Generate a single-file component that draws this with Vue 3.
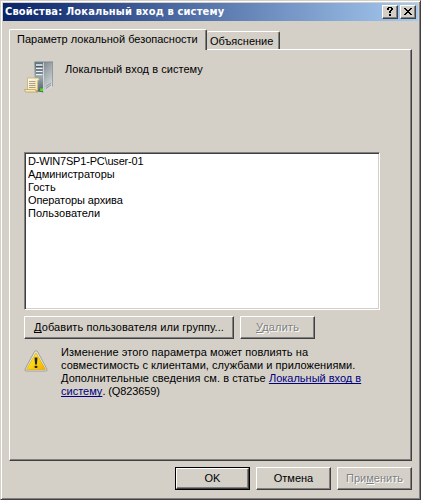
<script setup>
const accounts = [
  { name: 'D-WIN7SP1-PC\\user-01', spacing: '-0.19px' },
  { name: 'Администраторы', spacing: '-0.05px' },
  { name: 'Гость', spacing: '0' },
  { name: 'Операторы архива', spacing: '-0.1px' },
  { name: 'Пользователи', spacing: '0.03px' },
]
</script>

<template>
  <div class="window">
    <header class="titlebar">
      <span class="title">Свойства: Локальный вход в систему</span>
      <button class="caption" aria-label="Справка">
        <svg width="12" height="10" viewBox="0 0 12 10" shape-rendering="crispEdges">
          <path d="M4 0h4v1H4zM3 1h2v2H3zM7 1h2v2H7zM6 3h2v1H6zM5 4h2v2H5zM5 7h2v2H5z" />
        </svg>
      </button>
      <button class="caption close" aria-label="Закрыть">
        <svg width="12" height="10" viewBox="0 0 12 10" shape-rendering="crispEdges">
          <path d="M2 1h2v1h1v1h2V2h1V1h2v1H9v1H8v1H7v1h1v1h1v1h1v1H8V7H7V6H5v1H4v1H2V7h1V6h1V5h1V4H4V3H3V2H2z" />
        </svg>
      </button>
    </header>

    <nav class="tabs">
      <div class="tab active">Параметр локальной безопасности</div>
      <div class="tab other">Объяснение</div>
    </nav>

    <main class="pane">
      <div class="heading">
        <svg class="server" width="31" height="33" viewBox="0 0 31 33">
          <defs>
            <linearGradient id="side" x1="0.2" x2="0.6" y1="0" y2="1">
              <stop offset="0" stop-color="#848f93" />
              <stop offset=".55" stop-color="#b4bbbd" />
              <stop offset="1" stop-color="#dfe3e3" />
            </linearGradient>
            <linearGradient id="front" x1="0" x2="0" y1="0" y2="1">
              <stop offset="0" stop-color="#5d6f78" />
              <stop offset=".5" stop-color="#98a8b0" />
              <stop offset="1" stop-color="#4c5a60" />
            </linearGradient>
            <linearGradient id="paper" x1="0" x2="1" y1="0" y2="1">
              <stop offset="0" stop-color="#fffbe6" />
              <stop offset="1" stop-color="#f6e0a0" />
            </linearGradient>
          </defs>
          <path d="M10.5 1H20v30.500l-9.500-1.500z" fill="url(#front)" />
          <path d="M19.500 1H29v24.500L20 31.500z" fill="url(#side)" />
          <path d="M10.500 1H29" stroke="#7e898d" />
          <path d="M19.500 1.500v30" stroke="#dfe5e7" stroke-width=".8" />
          <path d="M28.500 1.500v24" stroke="#8a9396" stroke-width=".8" />
          <path d="M22 27.500l5-3.500M22 25.500l5-3.500" stroke="#848d90" stroke-width=".8" />
          <path d="M12 4h6.500M12 7.500h6.500M12 10.500h6.500M12 13.500h6.500" stroke="#eef2f4" stroke-width="1.300" />
          <path d="M12 5.500h6.500M12 9h6.500M12 12h6.500" stroke="#44525a" stroke-width=".9" />
          <rect x="16.200" y="27.400" width="2.800" height="2.800" fill="#4ee60c" />
          <path d="M3.500 17h10.300q1.400 0 1.400 1.300t-1.400 1.200v10H3.500z" fill="url(#paper)" stroke="#bba768" stroke-width=".7" />
          <path d="M.6 28.500h10.900q0 2.500 2.200 2.500H2.200Q.6 31 .6 28.500z" fill="#f9e9ae" stroke="#b39a58" stroke-width=".7" />
          <path d="M5 20.500h6.500M5 22.500h6.500M5 24.500h6.500M5 26.500h6.500" stroke="#8f8c80" stroke-width=".8" />
        </svg>
        <span class="policy">Локальный вход в систему</span>
      </div>

      <ul class="list">
        <li v-for="a in accounts" :key="a.name" :style="{ letterSpacing: a.spacing }">{{ a.name }}</li>
      </ul>

      <div class="actions">
        <button class="btn add"><span><u>Д</u>обавить пользователя или группу...</span></button>
        <button class="btn remove disabled"><span><u>У</u>далить</span></button>
      </div>

      <div class="notice">
        <svg class="warning" width="24" height="22" viewBox="0 0 24 22">
          <defs>
            <linearGradient id="amber" x1="0" x2="1" y1="0" y2="1">
              <stop offset="0" stop-color="#fff08a" />
              <stop offset=".5" stop-color="#fcd510" />
              <stop offset="1" stop-color="#f0ac00" />
            </linearGradient>
          </defs>
          <path d="M10.600 1.400Q12 0 13.400 1.400L23 19.200Q23.600 21 21.800 21H2.200Q.4 21 1 19.200z" fill="#e9e9e6" stroke="#96968f" stroke-width=".9" />
          <path d="M12 2.800 21.600 19.500H2.400z" fill="url(#amber)" stroke="#d6a000" stroke-width=".6" />
          <path d="M10.500 7.500h3l-.6 7h-1.800z" fill="#2b2509" />
          <rect x="10.700" y="15.700" width="2.600" height="2.400" rx=".6" fill="#2b2509" />
        </svg>
        <p>
          <span class="l1">Изменение этого параметра может повлиять на</span><br />
          <span class="l2">совместимость с клиентами, службами и приложениями.</span><br />
          <span class="l3">Дополнительные сведения см. в статье </span><a>Локальный вход в</a><br />
          <a>систему</a><span class="l4">. (Q823659)</span>
        </p>
      </div>
    </main>

    <footer class="footer">
      <button class="default"><span class="btn ok">OK</span></button>
      <button class="btn cancel">Отмена</button>
      <button class="btn apply disabled"><span>При<u>м</u>енить</span></button>
    </footer>
  </div>
</template>

<style>
body {
  margin: 0;
  background: #d4d0c8;
}
</style>

<style scoped>
* {
  box-sizing: border-box;
}
.window {
  width: 421px;
  height: 500px;
  padding: 1px;
  background: #d4d0c8;
  border: 1px solid;
  border-color: #d4d0c8 #404040 #404040 #d4d0c8;
  box-shadow: inset 1px 1px #fff, inset -1px -1px #808080;
  font: 11px/13px "Liberation Sans", Arial, sans-serif;
  color: #000;
  display: flex;
  flex-direction: column;
}
button {
  font: inherit;
  color: inherit;
  padding: 0;
  margin: 0;
  border: 0;
  border-radius: 0;
}
u,
a {
  text-decoration: underline;
  text-decoration-skip-ink: none;
}
.titlebar {
  display: flex;
  align-items: center;
  height: 18px;
  margin: 1px 1px 0;
  padding: 0 2px;
  background: linear-gradient(90deg, #0a246a, #a6caf0);
}
.title {
  flex: 1;
  color: #fff;
  font: bold 11px/16px "DejaVu Sans Condensed", "DejaVu Sans", sans-serif;
  letter-spacing: 0.17px;
  white-space: nowrap;
}
.caption {
  width: 16px;
  height: 14px;
  background: #d4d0c8;
  border: 1px solid;
  border-color: #fff #404040 #404040 #fff;
  box-shadow: inset -1px -1px #808080;
  display: flex;
  align-items: flex-start;
  justify-content: center;
  padding-top: 1px;
}
.caption.close {
  margin-left: 2px;
}
.tabs {
  display: flex;
  align-items: flex-end;
  height: 28px;
  padding-left: 7px;
}
.tab {
  border: 1px solid #fff;
  border-right-color: #404040;
  border-bottom: 0;
  border-radius: 2px 2px 0 0;
  box-shadow: inset -1px 0 #808080;
  white-space: nowrap;
}
.tab.active {
  width: 198px;
  height: 21px;
  padding: 3px 0 0 7px;
  margin-bottom: -1px;
  background: #d4d0c8;
  z-index: 1;
}
.tab.other {
  width: 73px;
  height: 18px;
  padding: 3px 0 0 3px;
  border-left: 0;
}
.pane {
  width: 403px;
  height: 412px;
  margin-left: 7px;
  padding: 11px 14px 0;
  border: 1px solid;
  border-color: #fff #404040 #404040 #fff;
  box-shadow: inset -1px -1px #808080;
}
.heading {
  display: flex;
  height: 91px;
}
.policy {
  margin: 2px 0 0 10px;
  letter-spacing: 0.05px;
}
.list {
  width: 356px;
  height: 158px;
  margin: 0;
  padding: 2px 3px;
  list-style: none;
  background: #fff;
  border: 1px solid;
  border-color: #808080 #fff #fff #808080;
  box-shadow: inset 1px 1px #404040, inset -1px -1px #d4d0c8;
}
.list li {
  height: 13px;
}
.btn {
  display: flex;
  align-items: center;
  justify-content: center;
  height: 23px;
  background: #d4d0c8;
  border: 1px solid;
  border-color: #fff #404040 #404040 #fff;
  box-shadow: inset -1px -1px #808080;
  white-space: nowrap;
}
.actions {
  display: flex;
  gap: 6px;
  margin-top: 6px;
}
.add {
  width: 210px;
  letter-spacing: 0.08px;
}
.remove {
  width: 75px;
  letter-spacing: 0.15px;
}
.disabled {
  color: #808080;
  text-shadow: 1px 1px #fff;
}
.notice {
  display: flex;
  margin-top: 6px;
}
.warning {
  margin-top: 5px;
}
.notice p {
  margin: 1px 0 0 13px;
  white-space: nowrap;
}
.l1 {
  letter-spacing: 0.06px;
}
.l2 {
  letter-spacing: 0.04px;
}
.l3 {
  letter-spacing: 0.07px;
  white-space: pre;
}
.l4 {
  letter-spacing: -0.12px;
}
a {
  color: #000080;
}
.footer {
  display: flex;
  gap: 6px;
  margin-top: 6px;
  padding-left: 173px;
}
.default {
  width: 75px;
  height: 23px;
  border: 1px solid #000;
}
.ok {
  height: 21px;
}
.cancel,
.apply {
  width: 75px;
}
</style>
